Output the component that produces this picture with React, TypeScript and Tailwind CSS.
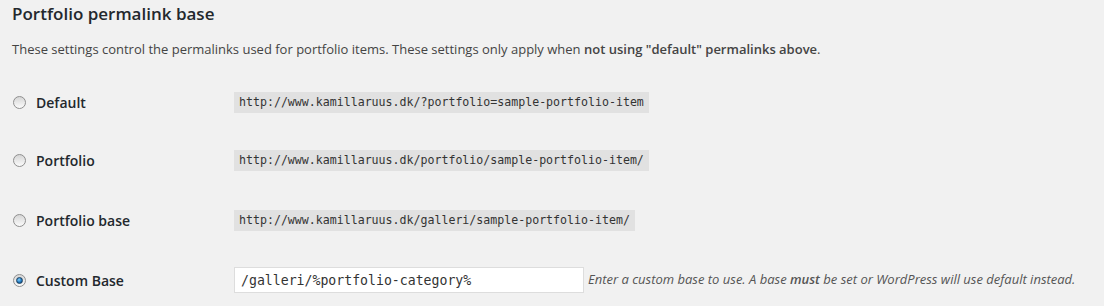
function Radio({ checked }: { checked?: boolean }) {
  return (
    <span className="flex h-[13px] w-[13px] shrink-0 items-center justify-center rounded-full border border-[#8f8f8f] bg-gradient-to-b from-[#d6d6d6] to-[#fbfbfb]">
      {checked && (
        <span className="h-[7px] w-[7px] rounded-full border border-[#1c3f5e] bg-[radial-gradient(circle_at_40%_35%,#7fd0ff,#1a6fb5_60%,#0d3e6b)]" />
      )}
    </span>
  );
}

function Row({
  label,
  checked,
  className,
  children,
}: {
  label: string;
  checked?: boolean;
  className: string;
  children: React.ReactNode;
}) {
  return (
    <div className={`flex items-center ${className}`}>
      <div className="flex w-[221px] items-center">
        <Radio checked={checked} />
        <span className="ml-[10px] text-[14px] font-semibold text-[#23282d]">
          {label}
        </span>
      </div>
      {children}
    </div>
  );
}

function Code({ children }: { children: React.ReactNode }) {
  return (
    <code className="bg-[#e1e1e1] px-[5px] py-[3px] font-['DejaVu_Sans_Mono',monospace] text-[11.6px] leading-[15px] text-[#333]">
      {children}
    </code>
  );
}

export default function App() {
  return (
    <div className="h-[306px] w-[1104px] bg-[#f1f1f1] pl-[12px] font-['Open_Sans',sans-serif]">
      <h2 className="pt-[2px] text-[17px] font-semibold leading-[24px] text-[#23282d]">
        Portfolio permalink base
      </h2>
      <p className="mt-[13px] text-[13px] leading-[20px] text-[#444]">
        These settings control the permalinks used for portfolio items. These
        settings only apply when <strong className="font-semibold">not using "default" permalinks above</strong>.
      </p>
      <div className="mt-[14px] pl-[1px]">
        <Row label="Default" className="h-[58px]">
          <Code>http://www.kamillaruus.dk/?portfolio=sample-portfolio-item</Code>
        </Row>
        <Row label="Portfolio" className="h-[59px]">
          <Code>http://www.kamillaruus.dk/portfolio/sample-portfolio-item/</Code>
        </Row>
        <Row label="Portfolio base" className="h-[60px]">
          <Code>http://www.kamillaruus.dk/galleri/sample-portfolio-item/</Code>
        </Row>
        <Row label="Custom Base" checked className="h-[60px]">
          <input
            readOnly
            value="/galleri/%portfolio-category%"
            className="h-[26px] w-[350px] border border-[#dddddd] bg-white px-[6px] font-['DejaVu_Sans_Mono',monospace] text-[13.2px] text-[#333] outline-none"
          />
          <span className="ml-[4px] text-[13px] italic text-[#555]">
            Enter a custom base to use. A base <strong className="font-semibold">must</strong> be
            set or WordPress will use default instead.
          </span>
        </Row>
      </div>
    </div>
  );
}
